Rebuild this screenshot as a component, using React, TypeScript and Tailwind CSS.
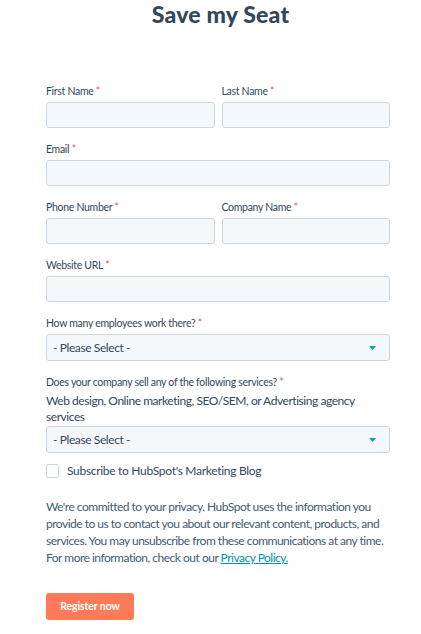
import React from "react";

const Req = () => <span className="text-[#f2545b]"> *</span>;

function Label({ children }: { children: React.ReactNode }) {
  return <label className="block text-[10.5px] tracking-[-0.3px] leading-[14px] text-[#33475b] h-[14px]">{children}</label>;
}

function Input() {
  return <div className="h-[26px] w-full rounded-[3px] border border-[#cbd6e2] bg-[#f5f8fa]" />;
}

function Select() {
  return (
    <div className="h-[27px] w-full rounded-[3px] border border-[#cbd6e2] bg-[#f5f8fa] flex items-center justify-between pl-[6px] pr-[13px]">
      <span className="text-[12px] tracking-[-0.4px] text-[#33475b]">- Please Select -</span>
      <svg width="7" height="4" viewBox="0 0 7 4"><path d="M0 0h7L3.5 4z" fill="#00a4bd" /></svg>
    </div>
  );
}

export default function App() {
  return (
    <div className="w-[421px] h-[634px] bg-white overflow-hidden" style={{ fontFamily: "Lato, 'Open Sans', sans-serif" }}>
      <h1 className="text-center text-[23px] font-black text-[#33475b] leading-[28px] pl-[20px] tracking-[0.2px]">Save my Seat</h1>
      <div className="pl-[46px] pr-[31px] pt-[56px]">
        <div className="flex gap-[7px]">
          <div className="flex-1">
            <Label>First Name<Req /></Label>
            <div className="mt-[4px]"><Input /></div>
          </div>
          <div className="flex-1">
            <Label>Last Name<Req /></Label>
            <div className="mt-[4px]"><Input /></div>
          </div>
        </div>
        <div className="mt-[14px]">
          <Label>Email <Req /></Label>
          <div className="mt-[4px]"><Input /></div>
        </div>
        <div className="flex gap-[7px] mt-[14px]">
          <div className="flex-1">
            <Label>Phone Number<Req /></Label>
            <div className="mt-[4px]"><Input /></div>
          </div>
          <div className="flex-1">
            <Label>Company Name<Req /></Label>
            <div className="mt-[4px]"><Input /></div>
          </div>
        </div>
        <div className="mt-[14px]">
          <Label>Website URL<Req /></Label>
          <div className="mt-[4px]"><Input /></div>
        </div>
        <div className="mt-[14px]">
          <Label>How many employees work there?<Req /></Label>
          <div className="mt-[4px]"><Select /></div>
        </div>
        <div className="mt-[14px]">
          <Label>Does your company sell any of the following services?<Req /></Label>
          <p className="text-[12px] tracking-[-0.45px] leading-[16px] text-[#33475b] mt-[4px] pr-[20px]">Web design, Online marketing, SEO/SEM, or Advertising agency services</p>
          <div className="mt-[1px]"><Select /></div>
        </div>
        <div className="flex items-center mt-[9px]">
          <div className="w-[13px] h-[14px] rounded-[2px] border border-[#cbd6e2] bg-white" />
          <span className="ml-[8px] text-[12px] tracking-[-0.3px] text-[#33475b]">Subscribe to HubSpot's Marketing Blog</span>
        </div>
        <p className="mt-[18px] text-[12px] tracking-[-0.5px] leading-[17px] text-[#425b76]">
          We're committed to your privacy. HubSpot uses the information you provide to us to contact you about our relevant content, products, and services. You may unsubscribe from these communications at any time. For more information, check out our <a className="text-[#0091ae] underline">Privacy Policy.</a>
        </p>
        <button className="mt-[27px] h-[27px] w-[88px] rounded-[3px] bg-[#ff7a59] text-white text-[10.5px] tracking-[-0.1px] font-bold">Register now</button>
      </div>
    </div>
  );
}
